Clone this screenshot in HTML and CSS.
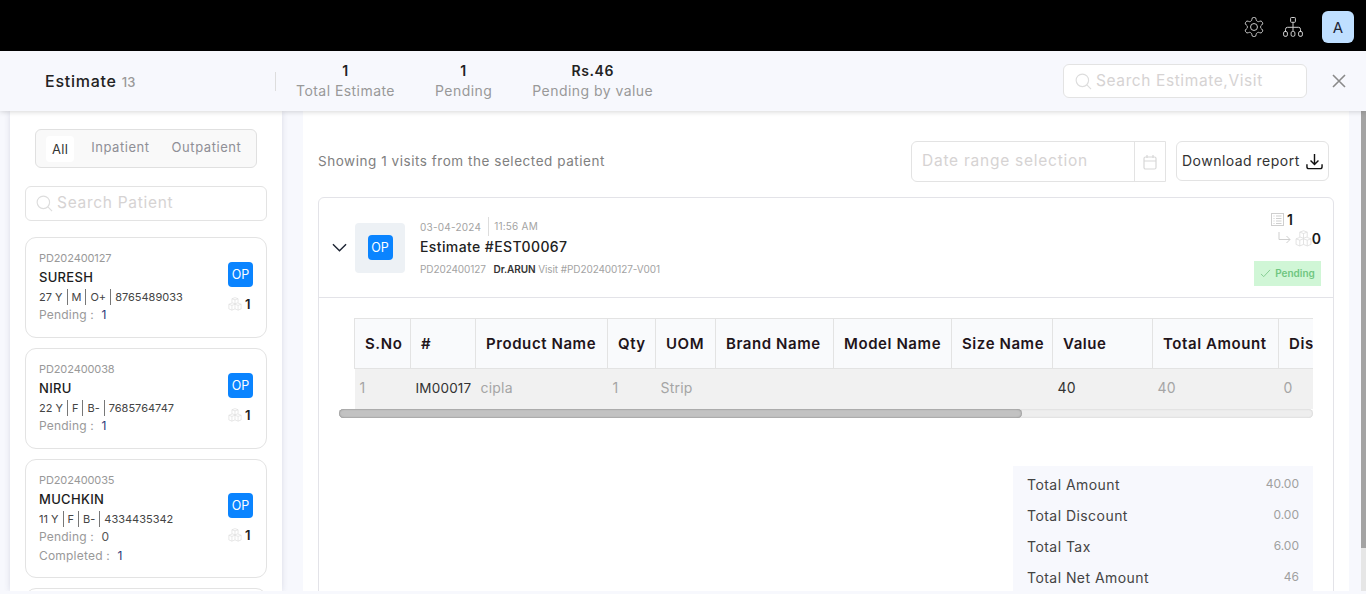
FILE: index.html
```html
<!DOCTYPE html>
<html lang="en">
<head>
    <meta charset="UTF-8">
    <meta name="viewport" content="width=device-width, initial-scale=1.0">
    <title>Estimate</title>
    <link rel="stylesheet" href="styles.css">
</head>
<body>
    <!-- shared icons -->
    <svg class="icon-defs" width="0" height="0">
        <symbol id="i-search" viewBox="0 0 18 18"><circle cx="7.8" cy="7.8" r="6.6" fill="none" stroke="currentColor" stroke-width="1.2"/><path d="M12.6 12.6l4.4 4.4" fill="none" stroke="currentColor" stroke-width="1.2"/></symbol>
        <symbol id="i-cubes" viewBox="0 0 16 16"><path d="M8 .7L11.5 2v4.5L8 7.8 4.5 6.5V2zM4.5 2L8 3.3 11.5 2M8 3.3v4.5M4.5 7L1 8.3v5.3L4.5 15 8 13.6V7.8M1 8.3l3.5 1.3L8 8.3M4.5 9.6V15M11.5 7L15 8.3v5.3L11.5 15 8 13.6M15 8.3l-3.5 1.3L8 8.3M11.5 9.6V15" fill="none" stroke="currentColor" stroke-width=".8"/></symbol>
    </svg>

    <div class="app">
        <!-- Top bar -->
        <div class="topbar">
            <svg class="top-icon" viewBox="1.6 1.6 20.8 20.8"><path d="M12.22 2h-.44a2 2 0 0 0-2 2v.18a2 2 0 0 1-1 1.73l-.43.25a2 2 0 0 1-2 0l-.15-.08a2 2 0 0 0-2.73.73l-.22.38a2 2 0 0 0 .73 2.73l.15.1a2 2 0 0 1 1 1.72v.51a2 2 0 0 1-1 1.74l-.15.09a2 2 0 0 0-.73 2.73l.22.38a2 2 0 0 0 2.73.73l.15-.08a2 2 0 0 1 2 0l.43.25a2 2 0 0 1 1 1.73V20a2 2 0 0 0 2 2h.44a2 2 0 0 0 2-2v-.18a2 2 0 0 1 1-1.73l.43-.25a2 2 0 0 1 2 0l.15.08a2 2 0 0 0 2.73-.73l.22-.39a2 2 0 0 0-.73-2.73l-.15-.08a2 2 0 0 1-1-1.74v-.5a2 2 0 0 1 1-1.74l.15-.09a2 2 0 0 0 .73-2.73l-.22-.38a2 2 0 0 0-2.73-.73l-.15.08a2 2 0 0 1-2 0l-.43-.25a2 2 0 0 1-1-1.73V4a2 2 0 0 0-2-2z"/><circle cx="12" cy="12" r="3.6"/></svg>
            <svg class="top-icon" viewBox="0 0 20 20"><rect x="7.6" y=".5" width="4.8" height="4.8" rx=".8"/><path d="M10 5.3v5M2.5 14.5v-2.2a2 2 0 0 1 2-2h11a2 2 0 0 1 2 2v2.2M10 10.3v4.2"/><rect x=".6" y="14.5" width="3.8" height="4.8" rx="1.4"/><rect x="8.1" y="14.5" width="3.8" height="4.8" rx="1.4"/><rect x="15.6" y="14.5" width="3.8" height="4.8" rx="1.4"/></svg>
            <div class="avatar">A</div>
        </div>

        <!-- Page header -->
        <div class="page-head">
            <div class="page-title">Estimate <span>13</span></div>
            <div class="stats">
                <div class="stat"><b>1</b><span>Total Estimate</span></div>
                <div class="stat"><b>1</b><span>Pending</span></div>
                <div class="stat"><b>Rs.46</b><span>Pending by value</span></div>
            </div>
            <div class="search head-search">
                <svg><use href="#i-search"/></svg>
                <span>Search Estimate,Visit</span>
            </div>
            <svg class="close" viewBox="0 0 14 14"><path d="M1 1l12 12M13 1L1 13"/></svg>
        </div>

        <div class="content">
            <!-- Patient list -->
            <div class="sidebar">
                <div class="tabs">
                    <span class="tab active">All</span>
                    <span class="tab">Inpatient</span>
                    <span class="tab">Outpatient</span>
                </div>
                <div class="search side-search">
                    <svg><use href="#i-search"/></svg>
                    <span>Search Patient</span>
                </div>

                <div class="card">
                    <div class="card-info">
                        <div class="pid">PD202400127</div>
                        <div class="pname">SURESH</div>
                        <div class="pmeta"><span>27 Y</span><span>M</span><span>O+</span><span>8765489033</span></div>
                        <div class="pcount">Pending : <b>1</b></div>
                    </div>
                    <div class="card-side">
                        <div class="op">OP</div>
                        <div class="cube-count"><svg><use href="#i-cubes"/></svg><b>1</b></div>
                    </div>
                </div>

                <div class="card">
                    <div class="card-info">
                        <div class="pid">PD202400038</div>
                        <div class="pname">NIRU</div>
                        <div class="pmeta"><span>22 Y</span><span>F</span><span>B-</span><span>7685764747</span></div>
                        <div class="pcount">Pending : <b>1</b></div>
                    </div>
                    <div class="card-side">
                        <div class="op">OP</div>
                        <div class="cube-count"><svg><use href="#i-cubes"/></svg><b>1</b></div>
                    </div>
                </div>

                <div class="card">
                    <div class="card-info">
                        <div class="pid">PD202400035</div>
                        <div class="pname">MUCHKIN</div>
                        <div class="pmeta"><span>11 Y</span><span>F</span><span>B-</span><span>4334435342</span></div>
                        <div class="pcount">Pending : <b class="dark">0</b></div>
                        <div class="pcount">Completed : <b>1</b></div>
                    </div>
                    <div class="card-side">
                        <div class="op">OP</div>
                        <div class="cube-count"><svg><use href="#i-cubes"/></svg><b>1</b></div>
                    </div>
                </div>

                <div class="card"></div>
            </div>

            <!-- Estimate detail -->
            <div class="main">
                <div class="toolbar">
                    <div class="showing">Showing 1 visits from the selected patient</div>
                    <div class="date-range">
                        <span>Date range selection</span>
                        <div class="date-btn">
                            <svg viewBox="0 0 16 16"><rect x="2" y="3" width="12" height="12" rx="1.5"/><path d="M2 7h12M5 1v3M11 1v3"/></svg>
                        </div>
                    </div>
                    <div class="download">
                        <span>Download report</span>
                        <svg viewBox="0 0 18 18"><path d="M9 1v11M4.8 8L9 12.2 13.2 8"/><path class="tray" d="M1 12v2.5a2 2 0 0 0 2 2h12a2 2 0 0 0 2-2V12"/></svg>
                    </div>
                </div>

                <div class="estimate">
                    <div class="est-head">
                        <svg class="chevron" viewBox="0 0 16 9"><path d="M1 1l7 7 7-7"/></svg>
                        <div class="op-tile"><div class="op">OP</div></div>
                        <div class="est-text">
                            <div class="est-date"><span>03-04-2024</span><span>11:56 AM</span></div>
                            <div class="est-title">Estimate #EST00067</div>
                            <div class="est-sub">PD202400127 <b>Dr.ARUN</b> Visit #PD202400127-V001</div>
                        </div>
                        <div class="est-right">
                            <div class="est-count">
                                <svg class="list-icon" viewBox="0 0 13 13"><rect x=".5" y=".5" width="12" height="12"/><path d="M2.5 3h1M5 3h5.5M2.5 5.5h1M5 5.5h5.5M2.5 8h1M5 8h5.5M2.5 10.5h1M5 10.5h5.5"/></svg>
                                <b>1</b>
                            </div>
                            <div class="est-count">
                                <svg class="sub-arrow" viewBox="0 0 13 13"><path d="M1 0v7.5h11M8.5 4l3.5 3.5L8.5 11"/></svg>
                                <svg class="cube-big"><use href="#i-cubes"/></svg>
                                <b>0</b>
                            </div>
                            <div class="chip">
                                <svg viewBox="0 0 12 10"><path d="M1 5.5L4 8.5 11 1"/></svg>
                                Pending
                            </div>
                        </div>
                    </div>

                    <div class="est-body">
                        <div class="table-wrap">
                            <table>
                                <thead>
                                    <tr>
                                        <th class="c-sno">S.No</th>
                                        <th class="c-code">#</th>
                                        <th class="c-prod">Product Name</th>
                                        <th class="c-qty">Qty</th>
                                        <th class="c-uom">UOM</th>
                                        <th class="c-brand">Brand Name</th>
                                        <th class="c-model">Model Name</th>
                                        <th class="c-size">Size Name</th>
                                        <th class="c-value">Value</th>
                                        <th class="c-total">Total Amount</th>
                                        <th class="c-disc">Discount</th>
                                    </tr>
                                </thead>
                                <tbody>
                                    <tr>
                                        <td class="sno-cell">1</td>
                                        <td class="dark-cell code-cell">IM00017</td>
                                        <td class="prod-cell">cipla</td>
                                        <td>1</td>
                                        <td>Strip</td>
                                        <td></td>
                                        <td></td>
                                        <td></td>
                                        <td class="dark-cell">40</td>
                                        <td>40</td>
                                        <td>0</td>
                                    </tr>
                                </tbody>
                            </table>
                        </div>
                        <div class="hscroll"><div class="hscroll-thumb"></div></div>

                        <div class="totals">
                            <div class="total-row"><span>Total Amount</span><em>40.00</em></div>
                            <div class="total-row"><span>Total Discount</span><em>0.00</em></div>
                            <div class="total-row"><span>Total Tax</span><em>6.00</em></div>
                            <div class="total-row"><span>Total Net Amount</span><em>46</em></div>
                        </div>
                    </div>
                </div>
            </div>

            <div class="vscroll"><div class="vscroll-thumb"></div></div>
        </div>
    </div>
</body>
</html>
```

FILE: styles.css
```css
* {
    box-sizing: border-box;
}
body {
    font-family: Inter, "Noto Sans", sans-serif;
    margin: 0;
    padding: 0;
    background-color: #f7f8fd;
    color: #222;
}
.icon-defs {
    display: block;
    height: 0;
}
.app {
    height: 591px;
    overflow: hidden;
    display: flex;
    flex-direction: column;
}

/* top bar */
.topbar {
    height: 51px;
    flex: none;
    background-color: #000;
    display: flex;
    align-items: center;
    justify-content: flex-end;
    padding: 3px 12px 0 0;
    gap: 19px;
}
.top-icon {
    width: 20px;
    height: 20px;
    fill: none;
    stroke: #cfcfcf;
    stroke-width: 1;
}
.avatar {
    width: 32px;
    height: 32px;
    background-color: #bfdfff;
    border-radius: 6px;
    display: flex;
    align-items: center;
    justify-content: center;
    font-size: 15px;
    color: #1d2433;
}

/* page header */
.page-head {
    height: 60px;
    flex: none;
    display: flex;
    align-items: center;
    background-color: #f7f8fd;
    box-shadow: 0 1px 5px rgba(0, 0, 0, 0.16);
    position: relative;
    z-index: 2;
}
.page-title {
    width: 230px;
    margin-left: 45px;
    font-size: 16px;
    font-weight: 500;
    letter-spacing: 0.75px;
}
.page-title span {
    font-size: 13px;
    color: #999;
    letter-spacing: 0;
}
.stats {
    display: flex;
    gap: 40px;
    border-left: 1px solid #ddd;
    height: 19px;
    padding-left: 20px;
    align-items: center;
}
.stat {
    display: flex;
    flex-direction: column;
    align-items: center;
    gap: 1px;
    padding-bottom: 2px;
    white-space: nowrap;
}
.stat b {
    font-size: 14px;
    font-weight: 600;
    line-height: 19px;
    letter-spacing: 0.6px;
}
.stat span {
    font-size: 14px;
    line-height: 19px;
    color: #999;
    letter-spacing: 0.45px;
}
.search {
    display: flex;
    align-items: center;
    background-color: #fff;
    border: 1px solid #e3e3e3;
    border-radius: 6px;
    color: #d6d3d3;
    white-space: nowrap;
}
.search svg {
    width: 17px;
    height: 17px;
    flex: none;
    color: #ddd;
}
.search span {
    margin-top: -2px;
}
.head-search {
    width: 244px;
    height: 34px;
    margin-left: auto;
    padding-left: 11px;
    gap: 4px;
    font-size: 15.5px;
    letter-spacing: 0.6px;
}
.close {
    width: 14px;
    height: 14px;
    margin: 0 20px 0 25px;
    fill: none;
    stroke: #8a8a8a;
    stroke-width: 1.6;
}

.content {
    flex: 1;
    min-height: 0;
    display: flex;
}

/* patient list */
.sidebar {
    width: 272px;
    margin-left: 10px;
    flex: none;
    background-color: #fff;
    box-shadow: 0 0 6px rgba(60, 70, 110, 0.16);
    padding: 18px 15px 0;
    overflow: hidden;
}
.tabs {
    width: 222px;
    height: 39px;
    margin-left: 10px;
    padding: 5px 10px;
    display: flex;
    align-items: center;
    background-color: #f9f9f9;
    border: 1px solid #e0e0e0;
    border-radius: 6px;
    font-size: 13px;
    color: #8f8f96;
    letter-spacing: 0.55px;
}
.tab {
    padding: 0 6px;
}
.tab + .tab {
    margin-left: 12px;
    padding: 0 5px 3px;
}
.tab.active {
    height: 26px;
    line-height: 26px;
    background-color: #fff;
    border-radius: 4px;
    color: #333;
    letter-spacing: 0.3px;
}
.side-search {
    height: 35px;
    margin: 18px 0 16px;
    padding-left: 10px;
    gap: 4px;
    font-size: 15.5px;
    letter-spacing: 0.7px;
}
.card {
    min-height: 101px;
    margin-bottom: 10px;
    padding: 13px 13px 0;
    display: flex;
    justify-content: space-between;
    border: 1px solid #e3e3e3;
    border-radius: 11px;
    background-color: #fff;
}
.card-info {
    min-width: 0;
    padding-bottom: 12px;
}
.pid {
    font-size: 11px;
    line-height: 15px;
    color: #999;
    letter-spacing: -0.1px;
}
.pname {
    font-size: 13px;
    font-weight: 500;
    line-height: 19px;
    margin-top: 2px;
    color: #1c1c1c;
    letter-spacing: 0.3px;
}
.pmeta {
    display: flex;
    font-size: 11px;
    line-height: 16px;
    margin-top: 2px;
    color: #444;
}
.pmeta span {
    padding: 0 4px;
    border-left: 1px solid #777;
}
.pmeta span:first-child {
    padding-left: 0;
    border-left: none;
}
.pcount {
    font-size: 12px;
    line-height: 18px;
    margin-top: 1px;
    color: #999;
    letter-spacing: 0.2px;
}
.pcount b {
    font-weight: 400;
    color: #2d3a78;
    margin-left: 4px;
}
.pcount b.dark {
    color: #555;
}
.card-side {
    width: 25px;
    display: flex;
    flex-direction: column;
    align-items: flex-start;
    justify-content: center;
    padding-bottom: 14px;
}
.op {
    width: 25px;
    height: 25px;
    flex: none;
    border-radius: 4px;
    background-color: #0a84ff;
    color: #fff;
    font-size: 12.5px;
    font-weight: 400;
    display: flex;
    align-items: center;
    justify-content: center;
}
.cube-count {
    display: flex;
    align-items: center;
    margin-top: 9px;
    gap: 3px;
    font-size: 13px;
    white-space: nowrap;
}
.cube-count svg {
    width: 14px;
    height: 14px;
    color: #dedede;
}
.cube-count b {
    font-weight: 600;
}

/* detail pane */
.main {
    width: 1046px;
    margin-left: 21px;
    flex: none;
    background-color: #fff;
    padding: 30px 15px 0;
    overflow: hidden;
}
.toolbar {
    height: 41px;
    display: flex;
    align-items: flex-start;
    margin-bottom: 15px;
    margin-right: 5px;
}
.showing {
    font-size: 13.5px;
    line-height: 41px;
    color: #808080;
    letter-spacing: 0.54px;
    margin-right: auto;
}
.date-range {
    width: 255px;
    height: 41px;
    display: flex;
    align-items: center;
    justify-content: space-between;
    padding-left: 10px;
    border: 1px solid #e3e3e3;
    border-radius: 6px 0 0 6px;
    font-size: 15.5px;
    color: #d6d3d3;
    letter-spacing: 0.75px;
}
.date-range span {
    margin-top: -2px;
}
.date-btn {
    width: 31px;
    height: 39px;
    display: flex;
    align-items: center;
    justify-content: center;
    border-left: 1px solid #e3e3e3;
}
.date-btn svg {
    width: 16px;
    height: 16px;
    fill: none;
    stroke: #d8d8d8;
    stroke-width: 1.2;
}
.download {
    width: 153px;
    height: 40px;
    margin-left: 10px;
    padding: 0 5px;
    display: flex;
    align-items: center;
    justify-content: space-between;
    border: 1px solid #e3e3e3;
    border-radius: 6px;
    font-size: 14px;
    color: #333;
    letter-spacing: 0.48px;
    white-space: nowrap;
}
.download span {
    margin-top: -1px;
}
.download svg {
    width: 17px;
    height: 17px;
    flex: none;
    fill: none;
    stroke: #111;
    stroke-width: 1.5;
}

.estimate {
    width: 1016px;
    height: 500px;
    border: 1px solid #e3e3e8;
    border-radius: 6px 6px 0 0;
}
.est-head {
    height: 100px;
    display: flex;
    align-items: center;
    padding: 0 12px 0 13px;
    border-bottom: 1px solid #e3e3e8;
}
.chevron {
    width: 15px;
    height: 9px;
    flex: none;
    fill: none;
    stroke: #1d2433;
    stroke-width: 1.5;
}
.op-tile {
    width: 50px;
    height: 50px;
    flex: none;
    margin-left: 8px;
    background-color: #edf1f5;
    border-radius: 4px;
    display: flex;
    align-items: center;
    justify-content: center;
}
.est-text {
    margin-left: 15px;
    padding-bottom: 2px;
    white-space: nowrap;
}
.est-date {
    display: flex;
    align-items: center;
    font-size: 10px;
    height: 19px;
    color: #a3a3a3;
    letter-spacing: 0.22px;
}
.est-date span + span {
    height: 19px;
    line-height: 19px;
    margin-left: 7px;
    padding-left: 5px;
    border-left: 1px solid #ddd;
}
.est-title {
    font-size: 14px;
    font-weight: 500;
    line-height: 20px;
    margin-top: 1px;
    color: #222;
    letter-spacing: 0.4px;
}
.est-sub {
    font-size: 10px;
    line-height: 14px;
    margin-top: 5px;
    color: #a3a3a3;
    letter-spacing: -0.09px;
}
.est-sub b {
    color: #333;
    font-weight: 600;
    margin-left: 5px;
}
.est-right {
    margin-left: auto;
    display: flex;
    flex-direction: column;
    align-items: flex-end;
}
.est-count {
    display: flex;
    align-items: center;
    height: 19px;
    font-size: 14px;
    color: #1a1a1a;
}
.est-count b {
    font-weight: 600;
}
.list-icon {
    width: 13px;
    height: 13px;
    margin-right: 3px;
    fill: none;
    stroke: #cfcfcf;
    stroke-width: 1;
}
.est-count:first-child {
    padding-right: 28px;
}
.sub-arrow {
    width: 13px;
    height: 13px;
    margin-right: 4px;
    fill: none;
    stroke: #cfcfcf;
    stroke-width: 1;
}
.cube-big {
    width: 17px;
    height: 17px;
    color: #dedede;
}
.chip {
    width: 67px;
    height: 25px;
    margin-top: 13px;
    display: flex;
    align-items: center;
    justify-content: center;
    gap: 4px;
    background-color: #d0f6d6;
    color: #6fc680;
    font-size: 10px;
    font-weight: 600;
}
.chip svg {
    width: 11px;
    height: 9px;
    fill: none;
    stroke: #7fc98d;
    stroke-width: 1;
}

.est-body {
    padding: 20px 20px 0;
}
.table-wrap {
    margin-left: 15px;
    overflow: hidden;
}
table {
    border-collapse: collapse;
    table-layout: fixed;
    width: 1060px;
}
th, td {
    text-align: left;
    white-space: nowrap;
    overflow: hidden;
}
th {
    height: 50px;
    padding: 0 0 0 10px;
    background-color: #f9fafc;
    border: 1px solid #e3e3e3;
    font-size: 15px;
    font-weight: 600;
    color: #22141a;
    letter-spacing: 0.58px;
}
td {
    height: 40px;
    padding: 0 0 2px 5px;
    background-color: #f1f1f1;
    font-size: 14px;
    color: #a5a5a5;
    letter-spacing: 0.2px;
}
.c-sno { width: 56px; }
.c-code { width: 65px; }
.c-prod { width: 132px; }
.c-qty { width: 48px; }
.c-uom { width: 60px; }
.c-brand { width: 118px; }
.c-model { width: 118px; }
.c-size { width: 101px; }
.c-value { width: 100px; }
.c-total { width: 126px; }
.c-disc { width: 136px; }
.dark-cell {
    color: #333;
}
.code-cell {
    font-size: 13.5px;
}
.hscroll {
    height: 9px;
    background-color: #eeeeee;
    border-radius: 5px;
    box-shadow: inset 0 0 2px #c4c4c4;
}
.hscroll-thumb {
    width: 683px;
    height: 9px;
    background-color: #c2c2c2;
    border-radius: 5px;
    box-shadow: inset 0 0 2px #6f6f6f;
}
.totals {
    width: 300px;
    margin: 48px 0 0 auto;
    padding: 4px 14px 0;
    background-color: #f7f8fd;
}
.total-row {
    height: 31px;
    padding-bottom: 2px;
    display: flex;
    align-items: center;
    justify-content: space-between;
    font-size: 14px;
    color: #444;
    letter-spacing: 0.45px;
}
.total-row em {
    font-style: normal;
    font-size: 12px;
    color: #a0a0a0;
    letter-spacing: 0;
    margin-top: -1px;
}

.vscroll {
    width: 5px;
    margin-left: 12px;
    flex: none;
    background-color: #e6e6e6;
}
.vscroll-thumb {
    height: 437px;
    background-color: #a3a3a3;
}
```
